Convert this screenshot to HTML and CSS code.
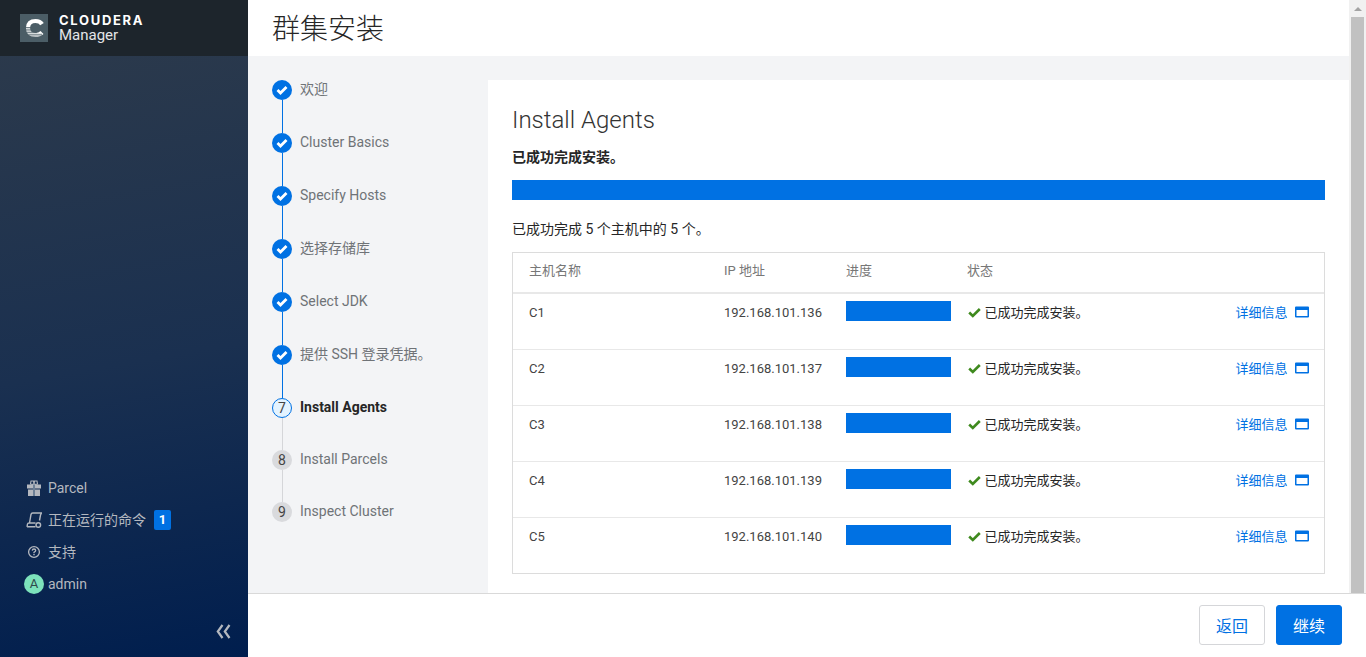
FILE: index.html
```html
<!DOCTYPE html>
<html lang="zh-CN">
  <head>
    <meta charset="UTF-8" />
    <meta name="viewport" content="width=device-width, initial-scale=1.0" />
    <title>群集安装</title>
    <link rel="stylesheet" href="styles.css">
  </head>
  <body>
    <aside class="sidebar">
      <div class="brand">
        <svg class="brand-logo" width="28" height="28" viewBox="0 0 28 28">
          <rect width="28" height="28" fill="#4b5d66" />
          <path d="M22 10.200Q20 7 15.500 7 8 7 8 14t7.500 7q4 0 6.500-2.500" fill="none" stroke="#fff" stroke-width="4.200" />
          <path d="M5 13.500h9M5 15.200h10M5 16.900h10.500M5 18.600h12M5 20.300h17M5 22h17" stroke="#4b5d66" stroke-width="0.800" />
        </svg>
        <div class="brand-text">
          <div class="brand-name">CLOUDERA</div>
          <div class="brand-product">Manager</div>
        </div>
      </div>
      <nav class="side-nav">
        <a class="side-link" href="#">
          <svg class="side-icon" width="16" height="16" viewBox="0 0 16 16"><path d="M1 4.500h14v4H1zM2 9.500h12V16H2z" fill="#b4b8bf"/><path d="M5 1h2.500L8 4.500 4.500 4zM11 1H8.500L8 4.500 11.500 4z" fill="none" stroke="#b4b8bf" stroke-width="1.100"/><path d="M7 4.500h2V16H7z" fill="#6d8096"/></svg>
          <span>Parcel</span>
        </a>
        <a class="side-link" href="#">
          <svg class="side-icon" width="16" height="16" viewBox="0 0 16 16"><path d="M3.500 11 5 2.500Q5.300 1 6.700 1H15.500L14.500 3 13.500 8.500M1 14.800 1.500 12Q1.700 11 3 11H9.500M1 14.800H9.500" fill="none" stroke="#b4b8bf" stroke-width="1.400"/><circle cx="12.300" cy="13" r="2.300" fill="none" stroke="#b4b8bf" stroke-width="1.400"/></svg>
          <span>正在运行的命令</span>
          <span class="badge">1</span>
        </a>
        <a class="side-link" href="#">
          <svg class="side-icon" width="16" height="16" viewBox="0 0 16 16"><circle cx="8" cy="8" r="5.400" fill="none" stroke="#b4b8bf" stroke-width="1.300"/><path d="M6.300 6.600Q6.400 5 8 5t1.700 1.500Q9.700 7.500 8 8.300v1" fill="none" stroke="#b4b8bf" stroke-width="1.300"/><path d="M7.300 10h1.400v1.300H7.300z" fill="#b4b8bf"/></svg>
          <span>支持</span>
        </a>
        <a class="side-link" href="#">
          <span class="avatar">A</span>
          <span>admin</span>
        </a>
      </nav>
      <div class="collapse">
        <svg width="15" height="15" viewBox="0 0 15 15"><path d="M6.500 1 1.800 7.500 6.500 14M13.500 1 8.800 7.500 13.500 14" fill="none" stroke="#b4b8bf" stroke-width="2.200"/></svg>
      </div>
    </aside>

    <div class="content">
      <div class="upper">
        <div class="page">
          <header class="page-header">
            <h1>群集安装</h1>
          </header>
          <div class="page-body">
            <ol class="steps">
              <li class="step done"><span class="step-dot"><svg width="12" height="10" viewBox="0 0 12 10"><path d="M1.500 5 4.500 8 10.500 2" fill="none" stroke="#fff" stroke-width="2.800"/></svg></span><span>欢迎</span></li>
              <li class="step done"><span class="step-dot"><svg width="12" height="10" viewBox="0 0 12 10"><path d="M1.500 5 4.500 8 10.500 2" fill="none" stroke="#fff" stroke-width="2.800"/></svg></span><span>Cluster Basics</span></li>
              <li class="step done"><span class="step-dot"><svg width="12" height="10" viewBox="0 0 12 10"><path d="M1.500 5 4.500 8 10.500 2" fill="none" stroke="#fff" stroke-width="2.800"/></svg></span><span>Specify Hosts</span></li>
              <li class="step done"><span class="step-dot"><svg width="12" height="10" viewBox="0 0 12 10"><path d="M1.500 5 4.500 8 10.500 2" fill="none" stroke="#fff" stroke-width="2.800"/></svg></span><span>选择存储库</span></li>
              <li class="step done"><span class="step-dot"><svg width="12" height="10" viewBox="0 0 12 10"><path d="M1.500 5 4.500 8 10.500 2" fill="none" stroke="#fff" stroke-width="2.800"/></svg></span><span>Select JDK</span></li>
              <li class="step done"><span class="step-dot"><svg width="12" height="10" viewBox="0 0 12 10"><path d="M1.500 5 4.500 8 10.500 2" fill="none" stroke="#fff" stroke-width="2.800"/></svg></span><span>提供 SSH 登录凭据。</span></li>
              <li class="step current"><span class="step-dot">7</span><span>Install Agents</span></li>
              <li class="step todo"><span class="step-dot">8</span><span>Install Parcels</span></li>
              <li class="step todo"><span class="step-dot">9</span><span>Inspect Cluster</span></li>
            </ol>
            <main class="card">
              <h2>Install Agents</h2>
              <p class="status">已成功完成安装。</p>
              <div class="progress-full"></div>
              <p class="summary">已成功完成 5 个主机中的 5 个。</p>
              <table class="hosts">
                <thead>
                  <tr><th class="col-name">主机名称</th><th class="col-ip">IP 地址</th><th class="col-progress">进度</th><th>状态</th><th></th></tr>
                </thead>
                <tbody>
                  <tr><td>C1</td><td>192.168.101.136</td><td><div class="bar"></div></td><td class="ok"><svg width="13" height="11" viewBox="0 0 13 11"><path d="M1.200 5.500 4.800 9 11.800 2" fill="none" stroke="#3f8a1e" stroke-width="2.600"/></svg>已成功完成安装。</td><td class="detail"><a href="#">详细信息</a><svg width="14" height="12" viewBox="0 0 14 12"><path d="M0 1.500Q0 .5 1 .5h12q1 0 1 1v9q0 1-1 1H1q-1 0-1-1zM1.500 4v6h11V4z" fill="#0071e3" fill-rule="evenodd"/></svg></td></tr>
                  <tr><td>C2</td><td>192.168.101.137</td><td><div class="bar"></div></td><td class="ok"><svg width="13" height="11" viewBox="0 0 13 11"><path d="M1.200 5.500 4.800 9 11.800 2" fill="none" stroke="#3f8a1e" stroke-width="2.600"/></svg>已成功完成安装。</td><td class="detail"><a href="#">详细信息</a><svg width="14" height="12" viewBox="0 0 14 12"><path d="M0 1.500Q0 .5 1 .5h12q1 0 1 1v9q0 1-1 1H1q-1 0-1-1zM1.500 4v6h11V4z" fill="#0071e3" fill-rule="evenodd"/></svg></td></tr>
                  <tr><td>C3</td><td>192.168.101.138</td><td><div class="bar"></div></td><td class="ok"><svg width="13" height="11" viewBox="0 0 13 11"><path d="M1.200 5.500 4.800 9 11.800 2" fill="none" stroke="#3f8a1e" stroke-width="2.600"/></svg>已成功完成安装。</td><td class="detail"><a href="#">详细信息</a><svg width="14" height="12" viewBox="0 0 14 12"><path d="M0 1.500Q0 .5 1 .5h12q1 0 1 1v9q0 1-1 1H1q-1 0-1-1zM1.500 4v6h11V4z" fill="#0071e3" fill-rule="evenodd"/></svg></td></tr>
                  <tr><td>C4</td><td>192.168.101.139</td><td><div class="bar"></div></td><td class="ok"><svg width="13" height="11" viewBox="0 0 13 11"><path d="M1.200 5.500 4.800 9 11.800 2" fill="none" stroke="#3f8a1e" stroke-width="2.600"/></svg>已成功完成安装。</td><td class="detail"><a href="#">详细信息</a><svg width="14" height="12" viewBox="0 0 14 12"><path d="M0 1.500Q0 .5 1 .5h12q1 0 1 1v9q0 1-1 1H1q-1 0-1-1zM1.500 4v6h11V4z" fill="#0071e3" fill-rule="evenodd"/></svg></td></tr>
                  <tr><td>C5</td><td>192.168.101.140</td><td><div class="bar"></div></td><td class="ok"><svg width="13" height="11" viewBox="0 0 13 11"><path d="M1.200 5.500 4.800 9 11.800 2" fill="none" stroke="#3f8a1e" stroke-width="2.600"/></svg>已成功完成安装。</td><td class="detail"><a href="#">详细信息</a><svg width="14" height="12" viewBox="0 0 14 12"><path d="M0 1.500Q0 .5 1 .5h12q1 0 1 1v9q0 1-1 1H1q-1 0-1-1zM1.500 4v6h11V4z" fill="#0071e3" fill-rule="evenodd"/></svg></td></tr>
                </tbody>
              </table>
            </main>
          </div>
        </div>
        <div class="scrollbar">
          <div class="scrollbar-arrow"></div>
          <div class="scrollbar-thumb"></div>
        </div>
      </div>
      <footer class="page-footer">
        <button class="btn">返回</button>
        <button class="btn btn-primary">继续</button>
      </footer>
    </div>
  </body>
</html>
```

FILE: styles.css
```css
* {
  box-sizing: border-box;
}
html, body {
  height: 100%;
}
body {
  display: flex;
  margin: 0;
  height: 657px;
  overflow: hidden;
  font-family: "Roboto", "Noto Sans CJK SC", sans-serif;
  font-size: 13px;
  color: #262626;
  background-color: #fff;
}
a {
  text-decoration: none;
}

/* sidebar */
.sidebar {
  display: flex;
  flex-direction: column;
  flex: 0 0 248px;
  background: linear-gradient(170deg, #2e3b4b 0%, #1a3050 55%, #001e4e 100%);
}
.brand {
  display: flex;
  align-items: center;
  gap: 11px;
  height: 56px;
  padding-left: 20px;
  background-color: #1d252c;
}
.brand-logo {
  flex: none;
}
.brand-name {
  font-family: "Inter", sans-serif;
  font-size: 13px;
  line-height: 14px;
  font-weight: 700;
  letter-spacing: 1.7px;
  color: #fff;
}
.brand-product {
  font-size: 15px;
  line-height: 17px;
  color: #e4e6e8;
}
.side-nav {
  display: flex;
  flex-direction: column;
  margin-top: auto;
  padding-left: 24px;
}
.side-link {
  display: flex;
  align-items: center;
  gap: 6px;
  height: 32px;
  font-size: 14px;
  line-height: 20px;
  color: #b4b8bf;
}
.side-icon {
  flex: none;
  width: 18px;
  padding-left: 2px;
}
.badge {
  width: 17px;
  height: 20px;
  margin-left: 2px;
  border-radius: 2px;
  font-size: 13px;
  font-weight: 700;
  line-height: 20px;
  text-align: center;
  color: #fff;
  background-color: #0071e3;
}
.avatar {
  width: 20px;
  height: 20px;
  margin-right: -2px;
  border-radius: 50%;
  font-size: 13px;
  line-height: 20px;
  text-align: center;
  color: #2e4a4a;
  background-color: #7ce2bb;
}
.collapse {
  display: flex;
  justify-content: flex-end;
  height: 57px;
  padding: 24px 17px 0 0;
}

/* main column */
.content {
  display: flex;
  flex-direction: column;
  flex: 1;
  min-width: 0;
}
.upper {
  display: flex;
  flex: 1;
  min-height: 0;
}
.page {
  display: flex;
  flex-direction: column;
  flex: 1;
  min-width: 0;
}
.page-header {
  flex: 0 0 56px;
  padding: 4px 0 0 24px;
  background-color: #fff;
}
.page-header h1 {
  margin: 0;
  font-size: 28px;
  font-weight: 300;
  line-height: 52px;
  color: #262626;
}
.page-body {
  display: flex;
  flex: 1;
  min-height: 0;
  background-color: #f3f4f6;
}
.scrollbar {
  display: flex;
  flex-direction: column;
  align-items: center;
  flex: 0 0 17px;
  background-color: #f1f1f1;
}
.scrollbar-arrow {
  flex: none;
  width: 0;
  height: 0;
  margin: 7px 0 6px;
  border-right: 4px solid transparent;
  border-bottom: 4px solid #a3a3a3;
  border-left: 4px solid transparent;
}
.scrollbar-thumb {
  flex: 1;
  width: 13px;
  background-color: #c1c1c1;
}

/* steps */
.steps {
  flex: 0 0 240px;
  margin: 0;
  padding: 24px 0 0 24px;
  list-style: none;
}
.step {
  position: relative;
  display: flex;
  gap: 8px;
  height: 53px;
  font-size: 14px;
  line-height: 18px;
  color: #6f7377;
}
.step::after {
  content: "";
  position: absolute;
  left: 10px;
  top: 20px;
  bottom: 0;
  width: 1px;
  background-color: #0071e3;
}
.step:last-child::after {
  display: none;
}
.step-dot {
  display: flex;
  flex: none;
  align-items: center;
  justify-content: center;
  width: 20px;
  height: 20px;
  border-radius: 50%;
  font-size: 14px;
  color: #444;
}
.done .step-dot {
  background-color: #0071e3;
}
.current {
  height: 52px;
  font-weight: 700;
  color: #262626;
}
.current::after {
  background-color: #d5d6d9;
}
.current .step-dot {
  border: 1px solid #0071e3;
  font-weight: 400;
  background-color: #e3f3ff;
}
.todo {
  height: 52px;
}
.todo::after {
  background-color: #d5d6d9;
}
.todo .step-dot {
  background-color: #d9dadd;
}

/* card */
.card {
  flex: 1;
  min-width: 0;
  margin-top: 24px;
  padding: 24px 24px 0 24px;
  background-color: #fff;
}
.card h2 {
  margin: 0;
  font-size: 24px;
  font-weight: 300;
  line-height: 32px;
  color: #333;
}
.status {
  margin: 11px 0 0;
  font-size: 14px;
  font-weight: 700;
  line-height: 20px;
}
.progress-full {
  height: 20px;
  margin-top: 13px;
  background-color: #0071e3;
}
.summary {
  margin: 19px 0 0;
  font-size: 14px;
  line-height: 20px;
}
.hosts {
  width: 100%;
  margin-top: 13px;
  border: 1px solid #dcdcdc;
  border-collapse: separate;
  border-spacing: 0;
  table-layout: fixed;
}
.hosts th {
  height: 41px;
  padding: 0 0 7px;
  border-bottom: 2px solid #e8e8e8;
  font-weight: 400;
  text-align: left;
  color: #777;
}
.col-name {
  width: 211px;
}
.col-ip {
  width: 122px;
}
.col-progress {
  width: 121px;
}
.hosts th:first-child,
.hosts td:first-child {
  padding-left: 16px;
}
.hosts td {
  height: 56px;
  padding: 9px 0 0;
  border-bottom: 1px solid #e8e8e8;
  vertical-align: top;
  line-height: 20px;
  color: #444;
}
.hosts tr:last-child td {
  height: 55px;
  border-bottom: 0;
}
.hosts th:nth-child(4) {
  width: 220px;
}
.bar {
  width: 105px;
  height: 20px;
  margin-top: -2px;
  background-color: #0071e3;
}
.hosts .ok {
  color: #262626;
}
.ok svg {
  margin: 0 3.5px 0 1px;
  vertical-align: -1px;
}
.hosts .detail {
  padding-right: 15px;
  text-align: right;
}
.detail a {
  color: #0071e3;
}
.detail svg {
  margin-left: 7.5px;
  vertical-align: -1px;
}

/* footer */
.page-footer {
  display: flex;
  flex: 0 0 64px;
  align-items: center;
  justify-content: flex-end;
  gap: 11px;
  padding: 0 24px 1px 0;
  border-top: 1px solid #d9d9d9;
  background-color: #fff;
}
.btn {
  width: 66px;
  height: 40px;
  border: 1px solid #d5d6d9;
  border-radius: 3px;
  font-family: inherit;
  font-size: 16px;
  color: #0071e3;
  background-color: #fff;
}
.btn-primary {
  border-color: #0071e3;
  color: #fff;
  background-color: #0071e3;
}
```
